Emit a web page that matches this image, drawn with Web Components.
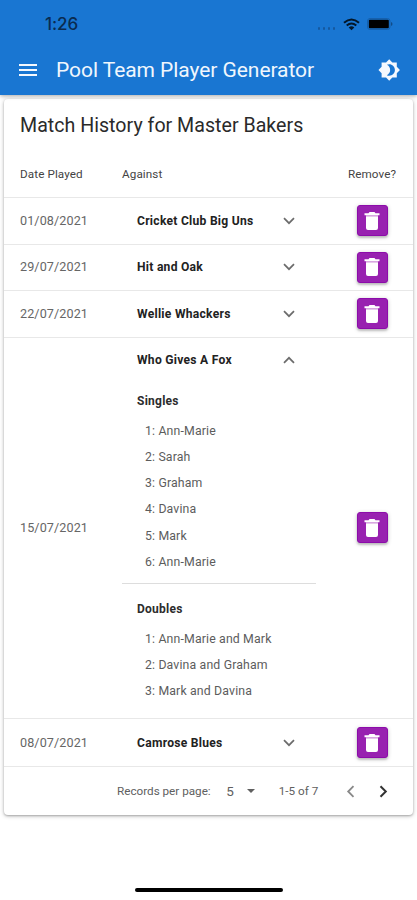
<!DOCTYPE html>
<html lang="en">
<head>
<meta charset="utf-8">
<title>Pool Team Player Generator</title>
<style>
html,body{margin:0;background:#fff}
body{width:417px;height:900px;overflow:hidden;font-family:Roboto,"Liberation Sans",sans-serif}
</style>
</head>
<body>
<pool-app></pool-app>
<script>
const define = (name, html) => {
  const t = document.createElement('template');
  t.innerHTML = html;
  customElements.define(name, class extends HTMLElement {
    constructor() {
      super();
      this.attachShadow({mode: 'open'}).appendChild(t.content.cloneNode(true));
    }
  });
};

define('status-bar', `
<style>
:host{display:flex;height:46px;align-items:center;padding:2px 24px 0 45px;box-sizing:border-box;color:#0a2b50}
.time{font:500 17px/20px Inter,sans-serif;letter-spacing:-.1px;flex:1}
.dots{display:flex;gap:2.6px;margin:9px 8px 0 0}
.dots i{width:2.4px;height:2.4px;border-radius:50%;background:#15599f}
.wifi{margin-right:7px}
</style>
<span class="time">1:26</span>
<span class="dots"><i></i><i></i><i></i><i></i></span>
<svg class="wifi" width="17" height="13" viewBox="0 0 17 13"><g fill="none" stroke="#041729" stroke-width="2"><path d="M1 4.8Q8.500-1.800 16 4.800"/><path d="M3.700 7.600Q8.500 3.400 13.300 7.600"/></g><path d="M5.700 9.400Q8.500 7.300 11.300 9.400L8.500 12.300Z" fill="#041729"/></svg>
<svg width="26" height="12" viewBox="0 0 26 12"><rect x=".5" y=".5" width="22.500" height="11" rx="2.500" fill="none" stroke="#1660ac"/><rect x="1.800" y="1.800" width="20" height="8.400" rx="1" fill="#000"/><path d="M24 4v4q1.500-.6 1.500-2T24 4" fill="#124c88"/></svg>`);

define('tool-bar', `
<style>
:host{display:flex;height:49px;align-items:center;box-sizing:border-box;padding:0 16px 1px 16px;color:#f0f6fd}
.title{flex:1;margin-left:16px;font-size:21px;line-height:26px;letter-spacing:-.06px;white-space:nowrap}
svg{display:block;fill:#f4f8fe}
</style>
<svg width="24" height="24" viewBox="0 0 24 24"><path d="M3 18h18v-2H3v2zm0-5h18v-2H3v2zm0-7v2h18V6H3z"/></svg>
<span class="title"><slot></slot></span>
<svg width="24" height="24" viewBox="0 0 24 24"><path fill-rule="evenodd" transform="translate(.8 .6) scale(.95)" d="M20 8.690V4h-4.690L12 .690 8.690 4H4v4.690L.690 12 4 15.310V20h4.690L12 23.310 15.310 20H20v-4.690L23.310 12 20 8.690zM12 18c-.890 0-1.740-.200-2.500-.550C11.560 16.500 13 14.420 13 12s-1.440-4.500-3.500-5.450C10.260 6.200 11.110 6 12 6c3.310 0 6 2.690 6 6s-2.690 6-6 6z"/></svg>`);

define('delete-button', `
<style>
:host{display:flex;width:31px;height:31px;align-items:center;justify-content:center;background:#9821b0;border-radius:3px;box-shadow:0 1px 4px rgba(0,0,0,.22),0 2px 2px rgba(0,0,0,.14);box-sizing:border-box;border:1px solid #8c0caa}
svg{display:block}
</style>
<svg width="24" height="24" viewBox="0 0 24 24"><path fill="#fff" d="M6 7.200h12V19q0 2-2 2H8q-2 0-2-2zM19.500 4.200h-4l-1-1.200h-5l-1 1.200h-4v2.100h15z"/><path fill="#e8cbee" d="M6 6.300h12v.9H6z"/></svg>`);

define('chevron-icon', `
<style>
:host{display:block;width:12px;height:8px}
:host([up]) svg{transform:scaleY(-1)}
svg{display:block}
</style>
<svg width="12" height="8" viewBox="0 0 12 8"><path d="M1 1.200L6 6.200L11 1.200" fill="none" stroke="#6c6c6c" stroke-width="1.700"/></svg>`);

define('history-row', `
<style>
:host{display:grid;grid-template-columns:102px 194px 1fr;padding:0 10px 0 16px;align-items:center;border-bottom:1px solid #e8e8e8;box-sizing:border-box;height:46.600px}
:host([open]){height:381.200px}
:host([last]){height:48px}
.date{font-size:12.600px;color:#666;letter-spacing:.1px;margin-top:-1px}
.team{display:flex;height:45px;align-items:center;padding:0 21.500px 0 15px;justify-content:space-between;font-size:12.100px;font-weight:700;color:#222;letter-spacing:.26px;white-space:nowrap}
:host([last]) .team{height:48px}
.main{align-self:start}
delete-button{justify-self:center;margin-left:25px}
</style>
<span class="date"><slot name="date"></slot></span>
<div class="main"><div class="team"><slot name="team"></slot><chevron-icon></chevron-icon></div><slot></slot></div>
<delete-button></delete-button>`);
customElements.whenDefined('history-row').then(() => {
  document.querySelector('pool-app').shadowRoot.querySelectorAll('history-row[open]').forEach(r =>
    r.shadowRoot.querySelector('chevron-icon').setAttribute('up', ''));
});

define('player-list', `
<style>
:host{display:block;padding:9px 0 0 15px;font-size:12.300px;color:#5c5c5c;white-space:nowrap}
:host([ruled]){border-bottom:1px solid #ddd;padding-bottom:7.500px}
:host(:not([ruled])){padding-top:16px}
.head{font-weight:700;font-size:12px;line-height:18px;color:#2c2c2c;letter-spacing:.25px;margin-bottom:8px}
.items{display:block;padding-left:8px;line-height:26.200px;letter-spacing:.15px}
</style>
<div class="head"><slot name="head"></slot></div>
<div class="items"><slot></slot></div>`);

define('page-footer', `
<style>
:host{display:flex;align-items:center;height:48px;box-sizing:border-box;padding:1px 25px 0 113px;color:#606060;font-size:11.700px;white-space:nowrap}
.size{margin-left:15.500px;font-size:13.500px;margin-top:-1px}
.tri{width:0;border:4.5px solid transparent;border-top-color:#606060;border-bottom:0;margin-left:13px}
.range{margin-left:24px;flex:1}
svg{display:block;margin-left:24px}
.tight{margin-left:0}
</style>
<span class="label">Records per page:</span><span class="size">5</span><span class="tri"></span><span class="range">1-5 of 7</span>
<svg class="tight" width="9" height="13" viewBox="0 0 9 13"><path d="M7.500 1.200L2.200 6.500L7.500 11.800" fill="none" stroke="#888" stroke-width="1.800"/></svg>
<svg width="9" height="13" viewBox="0 0 9 13"><path d="M1.500 1.200L6.800 6.500L1.500 11.800" fill="none" stroke="#333" stroke-width="2"/></svg>`);

define('history-card', `
<style>
:host{display:block;box-sizing:border-box;margin:4px 4px 0;height:716px;background:#fff;border-radius:4px;box-shadow:0 1px 4px rgba(0,0,0,.25),0 1px 2px rgba(0,0,0,.2)}
.title{height:52px;line-height:54px;padding-left:16px;font-size:19.600px;letter-spacing:.02px;color:#2a2a2a;white-space:nowrap}
.columns{height:47px;display:grid;grid-template-columns:102px 194px 1fr;padding:0 10px 0 16px;align-items:center;font-size:11.700px;font-weight:400;color:#444;letter-spacing:.1px;border-bottom:1px solid #e8e8e8;box-sizing:border-box}
.columns span:last-child{justify-self:center;margin-left:25px}
</style>
<div class="title"><slot name="title"></slot></div>
<div class="columns"><span>Date Played</span><span>Against</span><span>Remove?</span></div>
<slot></slot>`);

define('pool-app', `
<style>
:host{display:flex;flex-direction:column;height:900px;background:#fff}
header{height:95px;flex:none;background:#1976d2;box-shadow:0 1px 4px rgba(0,0,0,.35);position:relative}
history-card{flex:none}
.home{width:148px;height:4px;border-radius:2px;background:#000;margin:73px auto 0}
</style>
<header><status-bar></status-bar><tool-bar>Pool Team Player Generator</tool-bar></header>
<history-card>
<span slot="title">Match History for Master Bakers</span>
<history-row><span slot="date">01/08/2021</span><span slot="team">Cricket Club Big Uns</span></history-row>
<history-row><span slot="date">29/07/2021</span><span slot="team">Hit and Oak</span></history-row>
<history-row><span slot="date">22/07/2021</span><span slot="team">Wellie Whackers</span></history-row>
<history-row open><span slot="date">15/07/2021</span><span slot="team">Who Gives A Fox</span>
<player-list ruled><span slot="head">Singles</span><div>1: Ann-Marie</div><div>2: Sarah</div><div>3: Graham</div><div>4: Davina</div><div>5: Mark</div><div>6: Ann-Marie</div></player-list>
<player-list><span slot="head">Doubles</span><div>1: Ann-Marie and Mark</div><div>2: Davina and Graham</div><div>3: Mark and Davina</div></player-list>
</history-row>
<history-row last><span slot="date">08/07/2021</span><span slot="team">Camrose Blues</span></history-row>
<page-footer></page-footer>
</history-card>
<div class="home"></div>`);
</script>
</body>
</html>
